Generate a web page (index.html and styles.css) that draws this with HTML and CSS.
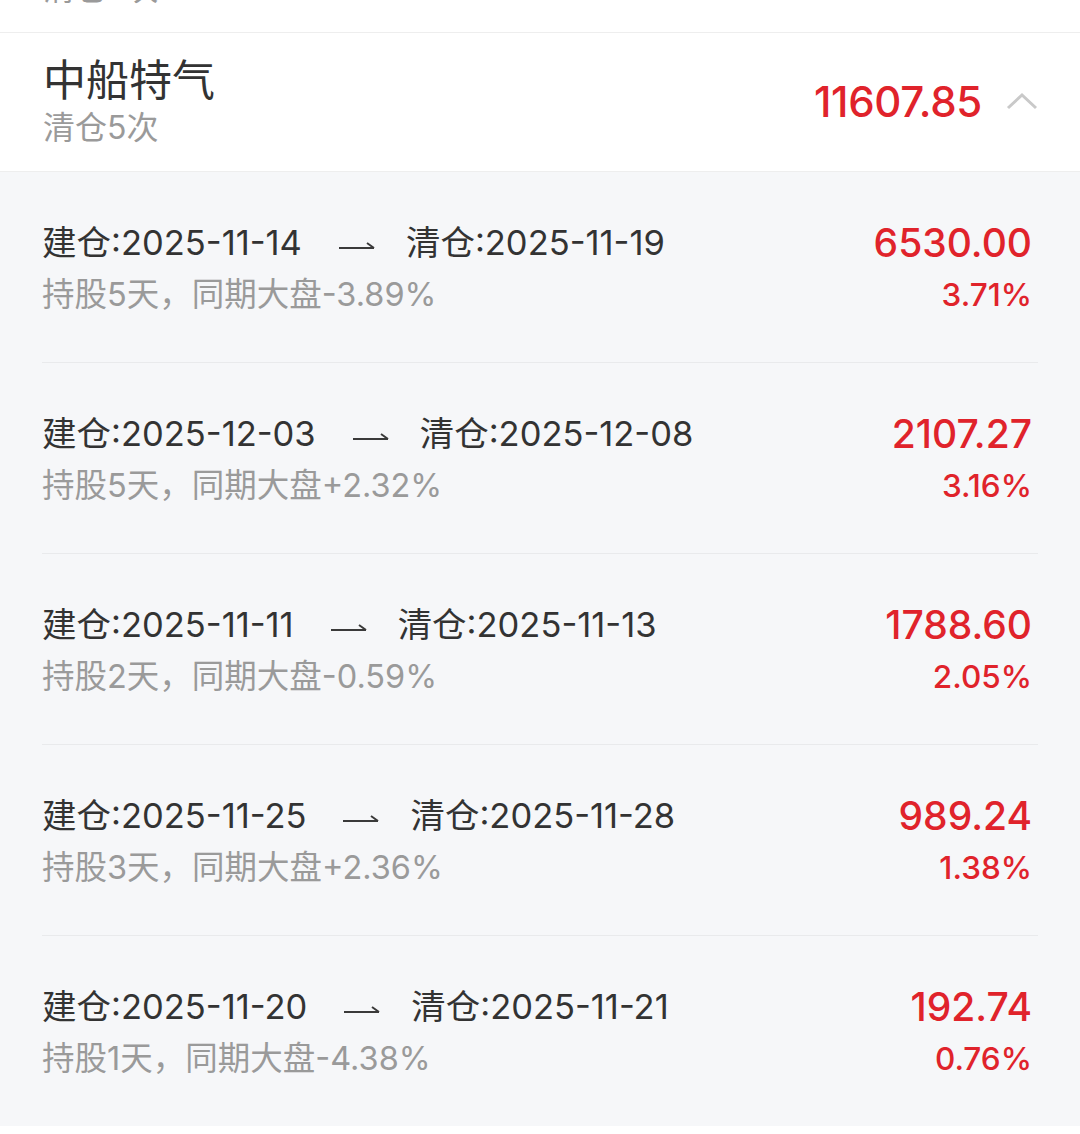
FILE: index.html
```html
<!DOCTYPE html>
<html lang="zh-CN">
<head>
  <meta charset="UTF-8">
  <meta name="viewport" content="width=device-width, initial-scale=1.0">
  <title>清仓记录</title>
  <link rel="stylesheet" href="styles.css">
</head>
<body>
  <div class="stock-list">
    <!-- previous stock, collapsed -->
    <div class="stock-head">
      <div class="stock-info">
        <div class="stock-name">中远海控</div>
        <div class="stock-sub">清仓2次</div>
      </div>
      <div class="stock-total">
        <span class="total-value">2381.40</span>
        <svg class="chevron" width="32" height="18" viewBox="0 0 32 18"><path d="M2 16 L16 3 L30 16" fill="none" stroke="#c9c9c9" stroke-width="3"/></svg>
      </div>
    </div>

    <!-- current stock, expanded -->
    <div class="stock-head">
      <div class="stock-info">
        <div class="stock-name">中船特气</div>
        <div class="stock-sub">清仓5次</div>
      </div>
      <div class="stock-total">
        <span class="total-value">11607.85</span>
        <svg class="chevron" width="32" height="18" viewBox="0 0 32 18"><path d="M2 16 L16 3 L30 16" fill="none" stroke="#c9c9c9" stroke-width="3"/></svg>
      </div>
    </div>

    <div class="trade-list">
      <div class="trade-row">
        <div class="trade-inner">
          <div class="trade-left">
            <div class="trade-dates">建仓:2025-11-14<svg class="arrow" width="36" height="12" viewBox="0 0 36 12"><path d="M0 9 H35 M28 4 L35 9" fill="none" stroke="#3a3a3a" stroke-width="2"/></svg>清仓:2025-11-19</div>
            <div class="trade-note">持股5天，同期大盘-3.89%</div>
          </div>
          <div class="trade-right">
            <div class="trade-profit">6530.00</div>
            <div class="trade-rate">3.71%</div>
          </div>
        </div>
      </div>

      <div class="trade-row">
        <div class="trade-inner">
          <div class="trade-left">
            <div class="trade-dates">建仓:2025-12-03<svg class="arrow" width="36" height="12" viewBox="0 0 36 12"><path d="M0 9 H35 M28 4 L35 9" fill="none" stroke="#3a3a3a" stroke-width="2"/></svg>清仓:2025-12-08</div>
            <div class="trade-note">持股5天，同期大盘+2.32%</div>
          </div>
          <div class="trade-right">
            <div class="trade-profit">2107.27</div>
            <div class="trade-rate">3.16%</div>
          </div>
        </div>
      </div>

      <div class="trade-row">
        <div class="trade-inner">
          <div class="trade-left">
            <div class="trade-dates">建仓:2025-11-11<svg class="arrow" width="36" height="12" viewBox="0 0 36 12"><path d="M0 9 H35 M28 4 L35 9" fill="none" stroke="#3a3a3a" stroke-width="2"/></svg>清仓:2025-11-13</div>
            <div class="trade-note">持股2天，同期大盘-0.59%</div>
          </div>
          <div class="trade-right">
            <div class="trade-profit">1788.60</div>
            <div class="trade-rate">2.05%</div>
          </div>
        </div>
      </div>

      <div class="trade-row">
        <div class="trade-inner">
          <div class="trade-left">
            <div class="trade-dates">建仓:2025-11-25<svg class="arrow" width="36" height="12" viewBox="0 0 36 12"><path d="M0 9 H35 M28 4 L35 9" fill="none" stroke="#3a3a3a" stroke-width="2"/></svg>清仓:2025-11-28</div>
            <div class="trade-note">持股3天，同期大盘+2.36%</div>
          </div>
          <div class="trade-right">
            <div class="trade-profit">989.24</div>
            <div class="trade-rate">1.38%</div>
          </div>
        </div>
      </div>

      <div class="trade-row">
        <div class="trade-inner">
          <div class="trade-left">
            <div class="trade-dates">建仓:2025-11-20<svg class="arrow" width="36" height="12" viewBox="0 0 36 12"><path d="M0 9 H35 M28 4 L35 9" fill="none" stroke="#3a3a3a" stroke-width="2"/></svg>清仓:2025-11-21</div>
            <div class="trade-note">持股1天，同期大盘-4.38%</div>
          </div>
          <div class="trade-right">
            <div class="trade-profit">192.74</div>
            <div class="trade-rate">0.76%</div>
          </div>
        </div>
      </div>
    </div>
  </div>
</body>
</html>
```

FILE: styles.css
```css
body {
  margin: 0;
  background-color: #ffffff;
  font-family: Inter, "Noto Sans CJK SC", sans-serif;
  color: #333333;
}

.stock-list {
  margin-top: -106px; /* list is scrolled, previous item partly hidden */
}

.stock-head {
  display: flex;
  align-items: center;
  justify-content: space-between;
  padding: 22px 42px 23px 43px;
  background-color: #ffffff;
  border-bottom: 1px solid #eeeeee;
}

.stock-name {
  font-size: 43px;
  line-height: 50px;
  color: #333333;
}

.stock-sub {
  margin-top: 3px;
  font-size: 32px;
  line-height: 40px;
  color: #9a9a9a;
}

.stock-total {
  display: flex;
  align-items: center;
  gap: 24px;
}

.total-value {
  font-size: 42px;
  font-weight: 500;
  color: #e0232b;
  letter-spacing: -0.3px;
}

.chevron {
  display: block;
  margin-top: -2px;
}

.trade-list {
  background-color: #f6f7f9;
}

.trade-row {
  padding: 0 42px;
}

.trade-inner {
  display: flex;
  justify-content: space-between;
  padding: 49px 6px 47px 0;
  border-bottom: 1px solid #e9eaec;
}

.trade-row:last-child .trade-inner {
  border-bottom: none;
}

.trade-dates {
  display: flex;
  align-items: center;
  font-size: 34.5px;
  line-height: 44px;
  color: #333333;
}

.arrow {
  display: block;
  margin: 4px 31px 0 37px;
}

.trade-note {
  margin-top: 10px;
  font-size: 32.5px;
  line-height: 40px;
  color: #9a9a9a;
}

.trade-right {
  text-align: right;
  color: #e0232b;
  font-weight: 500;
}

.trade-profit {
  font-size: 39px;
  line-height: 44px;
}

.trade-rate {
  margin-top: 10px;
  font-size: 31.5px;
  line-height: 40px;
}
```
